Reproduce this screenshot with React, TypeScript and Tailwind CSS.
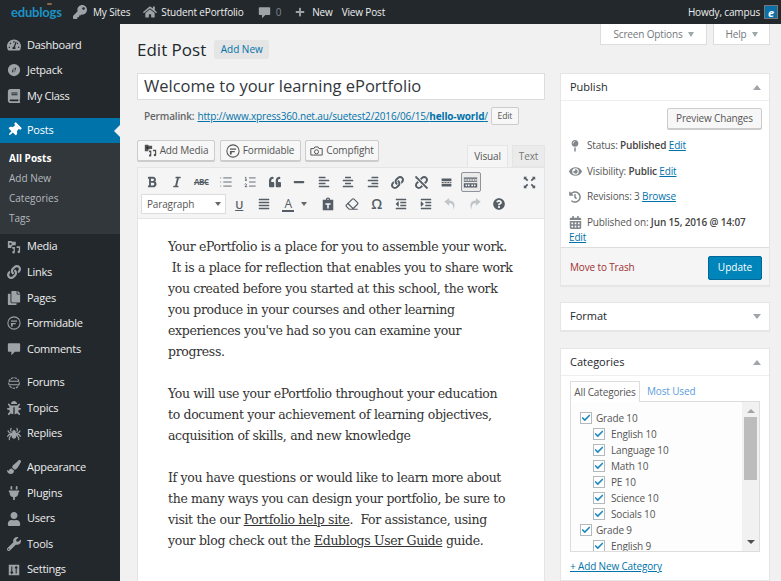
import React from 'react'
import {
  FaTachometerAlt, FaBook, FaThumbtack, FaLink, FaUnlink, FaCopy, FaPaintBrush, FaPlug, FaUser, FaWrench,
  FaKey, FaHome, FaPlus, FaBold, FaItalic, FaQuoteLeft, FaMinus, FaAlignLeft, FaAlignCenter, FaAlignRight,
  FaAlignJustify, FaOutdent, FaIndent, FaQuestionCircle, FaEye, FaHistory,
  FaCalendarAlt, FaMapPin, FaBug, FaSpider,
} from 'react-icons/fa'
import { Check, List, ListOrdered, Eraser } from 'lucide-react'

const MediaIcon = ({ className = '' }: { className?: string }) => (
  <svg viewBox="0 0 16 16" className={className} fill="currentColor">
    <path d="M1 1h4l1 1h4v4H7.500A2.500 2.500 0 0 0 5 8.500V9H1z" />
    <circle cx="4" cy="4.500" r="1.300" fill="#23282d" />
    <path d="M6 8h3v6a1.500 1.500 0 1 1-1.500-1.500V10H6zM11 7h4v6.500a1.500 1.500 0 1 1-1.500-1.500V9H11z" />
  </svg>
)

const FormidableIcon = ({ className = '' }: { className?: string }) => (
  <svg viewBox="0 0 16 16" className={className} fill="none" stroke="currentColor">
    <circle cx="8" cy="8" r="7" strokeWidth="1.200" />
    <path d="M4.500 5h7v1.500h-7zM4.500 8h5.500v1.500H6.500V12h-2z" fill="currentColor" stroke="none" />
  </svg>
)

const JetpackIcon = ({ className = '' }: { className?: string }) => (
  <svg viewBox="0 0 16 16" className={className} fill="currentColor">
    <path d="M8 1a7 7 0 1 0 0 14A7 7 0 0 0 8 1zM7.200 10.500H5.600L7.200 5zM8.800 11V5.500h1.600z" fillRule="evenodd" />
  </svg>
)

const GlobeIcon = ({ className = '' }: { className?: string }) => (
  <svg viewBox="0 0 16 16" className={className} fill="none" stroke="currentColor" strokeWidth="1.300">
    <circle cx="8" cy="8" r="6" strokeDasharray="3 1" />
    <path d="M2.500 6h11M2.500 10h11" />
  </svg>
)

const BubbleIcon = ({ className = '' }: { className?: string }) => (
  <svg viewBox="0 0 16 16" className={className} fill="currentColor">
    <path d="M2 1.500h12a1 1 0 0 1 1 1V10a1 1 0 0 1-1 1H9l-4 4v-4H2a1 1 0 0 1-1-1V2.500a1 1 0 0 1 1-1z" />
  </svg>
)

const SettingsIcon = ({ className = '' }: { className?: string }) => (
  <svg viewBox="0 0 16 16" className={className}>
    <rect x="2" y="2" width="12" height="12" fill="currentColor" />
    <path d="M5.500 4v8M4 10l1.500 2L7 10M10.500 12V4M9 6l1.500-2L12 6" stroke="#23282d" strokeWidth="1.200" fill="none" />
  </svg>
)

const MoreIcon = ({ className = '' }: { className?: string }) => (
  <svg viewBox="0 0 16 16" className={className} fill="currentColor">
    <path d="M2 3h12v3.500H2zM2 7.500h2.500v1H2zM5.500 7.500h2.500v1H5.500zM9 7.500h2.500v1H9zM12.500 7.500H14v1h-1.500zM2 9.500h12V13H2z" />
  </svg>
)

const KitchenIcon = ({ className = '' }: { className?: string }) => (
  <svg viewBox="0 0 18 14" className={className} fill="currentColor">
    <path d="M1 1h16v1.500H1zM1 3.500h2v1H1zM4 3.500h2v1H4zM7 3.500h2v1H7zM10 3.500h2v1h-2zM13 3.500h2v1h-2zM16 3.500h1v1h-1zM1 5.500h16v1H1zM1 8h16v5H1z" />
    <path d="M3 9.500h2v2H3zM6 9.500h2v2H6zM10 9.500h2v2h-2zM13 9.500h2v2h-2z" fill="#f5f5f5" />
  </svg>
)

const FullscreenIcon = ({ className = '' }: { className?: string }) => (
  <svg viewBox="0 0 16 16" className={className} fill="currentColor">
    <path d="M1 1h4L3.800 2.200 6.500 5 5 6.500 2.200 3.800 1 5zM15 1v4l-1.200-1.200L11 6.500 9.500 5l2.700-2.800L11 1zM1 15v-4l1.200 1.200L5 9.500 6.500 11l-2.700 2.800L5 15zM15 15h-4l1.200-1.200L9.500 11 11 9.500l2.800 2.700L15 11z" />
  </svg>
)

const CompfightIcon = ({ className = '' }: { className?: string }) => (
  <svg viewBox="0 0 16 14" className={className} fill="none" stroke="currentColor" strokeWidth="1.200">
    <path d="M1 4h4l1-2h4l1 2h4v8H1z" />
    <circle cx="8" cy="8" r="2.500" />
  </svg>
)

const PasteIcon = ({ className = '' }: { className?: string }) => (
  <svg viewBox="0 0 16 16" className={className} fill="currentColor">
    <path d="M2 3h3.500a2.500 2.500 0 0 1 5 0H14v12H2zM7 3h2a1 1 0 0 0-2 0zM5 7v1.800h2.100V13h1.800V8.800H11V7z" fillRule="evenodd" />
  </svg>
)

const UndoIcon = ({ className = '' }: { className?: string }) => (
  <svg viewBox="0 0 16 16" className={className} fill="currentColor">
    <path d="M7 1 1.500 5.500 7 10V7.200c3.500 0 5 2 5 7.300 2.300-5.500 1.500-10.500-5-10.500z" />
  </svg>
)

const RedoIcon = ({ className = '' }: { className?: string }) => (
  <svg viewBox="0 0 16 16" className={className} fill="currentColor">
    <path d="M9 1l5.500 4.500L9 10V7.200c-3.500 0-5 2-5 7.300C1.700 9 2.500 4 9 4z" />
  </svg>
)

type NavItem = { label: string; icon: React.ComponentType<{ className?: string }>; gap?: boolean }

const NAV_TOP: NavItem[] = [
  { label: 'Dashboard', icon: FaTachometerAlt },
  { label: 'Jetpack', icon: JetpackIcon },
  { label: 'My Class', icon: FaBook },
]

const NAV_BOTTOM: NavItem[] = [
  { label: 'Media', icon: MediaIcon },
  { label: 'Links', icon: FaLink },
  { label: 'Pages', icon: FaCopy },
  { label: 'Formidable', icon: FormidableIcon },
  { label: 'Comments', icon: BubbleIcon },
  { label: 'Forums', icon: GlobeIcon, gap: true },
  { label: 'Topics', icon: FaBug },
  { label: 'Replies', icon: FaSpider },
  { label: 'Appearance', icon: FaPaintBrush, gap: true },
  { label: 'Plugins', icon: FaPlug },
  { label: 'Users', icon: FaUser },
  { label: 'Tools', icon: FaWrench },
  { label: 'Settings', icon: SettingsIcon },
]

const NavRow = ({ item }: { item: NavItem }) => (
  <div className={`flex h-[25.6px] shrink-0 items-center pl-[7px] text-[#eeeeee] ${item.gap ? 'mt-2' : ''}`}>
    <span className="flex w-[20px] shrink-0 items-center">
      <item.icon className="h-[14px] w-[14px] text-[#9ea3a8]" />
    </span>
    <span>{item.label}</span>
  </div>
)

const Sidebar = () => (
  <div className="flex h-full w-[120px] shrink-0 flex-col overflow-hidden bg-[#23282d] pt-2 text-[11px] tracking-[-0.25px]">
    {NAV_TOP.map((item) => (
      <NavRow key={item.label} item={item} />
    ))}
    <div className="relative mt-[9px] flex h-[25px] shrink-0 items-center bg-[#0073aa] pl-[7px] text-white">
      <span className="flex w-[20px] shrink-0 items-center">
        <FaThumbtack className="h-[14px] w-[14px] rotate-45" />
      </span>
      <span>Posts</span>
      <span className="absolute right-0 top-[7px] h-0 w-0 border-y-[6px] border-r-[6px] border-y-transparent border-r-[#f1f1f1]" />
    </div>
    <div className="flex h-[91px] shrink-0 flex-col bg-[#32373c] pl-[9px] pt-[5px] text-[10px] leading-[20px] tracking-normal text-[#b4b9be]">
      <div className="font-bold text-white">All Posts</div>
      <div>Add New</div>
      <div>Categories</div>
      <div>Tags</div>
    </div>
    {NAV_BOTTOM.map((item) => (
      <NavRow key={item.label} item={item} />
    ))}
  </div>
)

const TopBar = () => (
  <div className="flex h-6 shrink-0 items-center bg-[#23282d] pl-[11px] pr-[3px] text-[10px] tracking-[-0.15px] text-[#eeeeee]">
    <span className="relative mr-[16px] w-[46px] text-[13px] font-bold leading-none tracking-[-0.2px] text-[#1c93c4]" style={{ fontFamily: 'Lato, sans-serif' }}>
      edublogs
      <span className="absolute right-[5px] top-[-3px] h-[2px] w-[5px] rounded-full bg-[#8a6a4a]" />
    </span>
    <FaKey className="mr-[6px] h-[14px] w-[14px] text-[#9ea3a8]" />
    <span className="mr-[13px]">My Sites</span>
    <FaHome className="mr-[4px] h-[14px] w-[14px] text-[#9ea3a8]" />
    <span className="mr-[14px]">Student ePortfolio</span>
    <BubbleIcon className="mr-[5px] h-[13px] w-[13px] text-[#9ea3a8]" />
    <span className="mr-[14px] text-[#81868b]">0</span>
    <FaPlus className="mr-[7px] h-[10px] w-[10px] text-[#9ea3a8]" />
    <span className="mr-[9px]">New</span>
    <span>View Post</span>
    <span className="ml-auto mr-[4px]">Howdy, campus</span>
    <span className="flex h-[14px] w-[14px] items-center justify-center border border-[#777] bg-[#0b6fa8] text-[11px] font-bold italic leading-none text-white">e</span>
  </div>
)

const Btn = ({ icon, label, className = 'px-[5px]' }: { icon?: React.ReactNode; label: string; className?: string }) => (
  <div className={`flex h-[21px] items-center justify-center gap-[3px] rounded-[2px] border border-[#cccccc] bg-[#f7f7f7] text-[10px] tracking-[-0.15px] text-[#555555] shadow-[0_1px_0_#cccccc] ${className}`}>
    {icon}
    <span>{label}</span>
  </div>
)

const TB = ({ w = 24.5, children }: { w?: number; children: React.ReactNode }) => (
  <span className="flex h-[20px] items-center justify-center text-[#555d66]" style={{ width: w }}>
    {children}
  </span>
)

const i = 'h-[12px] w-[12px]'

const Toolbar = () => (
  <div className="border border-[#e5e5e5] bg-[#f5f5f5] py-[3px] pl-[2px]">
    <div className="flex h-[22px] items-center">
      <TB><FaBold className={i} /></TB>
      <TB><FaItalic className={i} /></TB>
      <TB><span className="text-[8px] font-bold tracking-[-0.5px]"><s>ABC</s></span></TB>
      <TB><List className="h-[14px] w-[14px]" strokeWidth={1.5} /></TB>
      <TB><ListOrdered className="h-[14px] w-[14px]" strokeWidth={1.5} /></TB>
      <TB><FaQuoteLeft className={i} /></TB>
      <TB><FaMinus className={i} /></TB>
      <TB><FaAlignLeft className={i} /></TB>
      <TB><FaAlignCenter className={i} /></TB>
      <TB><FaAlignRight className={i} /></TB>
      <TB><FaLink className="h-[13px] w-[13px]" /></TB>
      <TB><FaUnlink className="h-[13px] w-[13px]" /></TB>
      <TB><MoreIcon className="h-[13px] w-[13px]" /></TB>
      <span className="ml-[2px] flex h-[20px] w-[20px] items-center justify-center rounded-[2px] border border-[#8f9499] bg-[#ebebeb] text-[#555d66]">
        <KitchenIcon className="h-[13px] w-[15px]" />
      </span>
      <span className="ml-auto mr-[8px] text-[#555d66]">
        <FullscreenIcon className="h-[13px] w-[13px]" />
      </span>
    </div>
    <div className="flex h-[22px] items-center pl-[1px]">
      <div className="mr-[1px] flex h-[20px] w-[85px] items-center justify-between border border-[#dddddd] bg-white pl-[5px] pr-[4px] text-[10px] tracking-[-0.15px] text-[#555555]">
        <span>Paragraph</span>
        <span className="h-0 w-0 border-x-[3px] border-t-[4px] border-x-transparent border-t-[#666]" />
      </div>
      <TB><span className="text-[11px] font-semibold leading-none underline">U</span></TB>
      <TB><FaAlignJustify className={i} /></TB>
      <TB>
        <span className="border-b-2 border-[#555d66] px-[2px] text-[12px] font-normal leading-[13px]">A</span>
      </TB>
      <span className="mr-[9px] h-0 w-0 border-x-[3px] border-t-[4px] border-x-transparent border-t-[#666]" />
      <TB><PasteIcon className="h-[14px] w-[14px]" /></TB>
      <TB><Eraser className="h-[14px] w-[14px]" strokeWidth={2} /></TB>
      <TB><span className="text-[14px] font-semibold leading-none">Ω</span></TB>
      <TB><FaOutdent className={i} /></TB>
      <TB><FaIndent className={i} /></TB>
      <TB><UndoIcon className="h-[14px] w-[14px] text-[#c2c5c8]" /></TB>
      <TB><RedoIcon className="h-[14px] w-[14px] text-[#c2c5c8]" /></TB>
      <TB><FaQuestionCircle className={i} /></TB>
    </div>
  </div>
)

const Editor = () => (
  <div className="min-h-0 flex-1 border-x border-[#e5e5e5] bg-white pl-[30px] pt-[17px] text-[12.500px] leading-[21px] tracking-[-0.34px] text-[#333333]" style={{ fontFamily: '"DejaVu Serif", serif' }}>
    <p>
      Your ePortfolio is a place for you to assemble your work.<br />
      &nbsp;It is a place for reflection that enables you to share work<br />
      you created before you started at this school, the work<br />
      you produce in your courses and other learning<br />
      experiences you've had so you can examine your<br />
      progress.
    </p>
    <p className="mt-[21px]">
      You will use your ePortfolio throughout your education<br />
      to document your achievement of learning objectives,<br />
      acquisition of skills, and new knowledge
    </p>
    <p className="mt-[21px]">
      If you have questions or would like to learn more about<br />
      the many ways you can design your portfolio, be sure to<br />
      visit the our <u>Portfolio help site</u>.&nbsp; For assistance, using<br />
      your blog check out the <u>Edublogs User Guide</u> guide.
    </p>
  </div>
)

const EditorColumn = () => (
  <div className="flex w-[408px] shrink-0 flex-col">
    <div className="flex h-[27px] items-center border border-[#dddddd] bg-white pl-[6px] text-[16.500px] text-[#32373c]">
      Welcome to your learning ePortfolio
    </div>
    <div className="mt-[7px] flex h-[18px] items-center pl-[7px] text-[10px] tracking-[-0.15px] text-[#666666]">
      <span className="mr-[3px] font-semibold">Permalink:</span>
      <span className="text-[#0073aa] underline">http://www.xpress360.net.au/suetest2/2016/06/15/<b>hello-world</b>/</span>
      <span className="ml-[3px] flex h-[18px] w-[28px] items-center justify-center rounded-[2px] border border-[#cccccc] bg-[#f7f7f7] text-[8.500px] text-[#555555]">Edit</span>
    </div>
    <div className="mt-[15px] flex items-end justify-between">
      <div className="mb-[6px] flex gap-[4.5px]">
        <Btn className="w-[78px]" icon={<MediaIcon className="h-[13px] w-[13px]" />} label="Add Media" />
        <Btn className="w-[81px]" icon={<FormidableIcon className="h-[14px] w-[14px]" />} label="Formidable" />
        <Btn className="w-[74px]" icon={<CompfightIcon className="h-[12px] w-[13px]" />} label="Compfight" />
      </div>
      <div className="flex items-end gap-[4px] text-[10px] tracking-[-0.15px] text-[#555555]">
        <span className="flex h-[22px] w-[41px] items-center justify-center border border-b-0 border-[#e5e5e5] bg-[#f5f5f5]">Visual</span>
        <span className="flex h-[22px] w-[33px] items-center justify-center border border-[#e5e5e5] bg-[#ebebeb] text-[#777777]">Text</span>
      </div>
    </div>
    <Toolbar />
    <Editor />
  </div>
)

const Box = ({ title, up = true, children, className = '' }: { title: string; up?: boolean; children?: React.ReactNode; className?: string }) => (
  <div className={`border border-[#e5e5e5] bg-white shadow-[0_1px_1px_rgba(0,0,0,0.04)] ${className}`}>
    <div className={`flex h-[27px] items-center justify-between pl-[9px] pr-[8px] text-[11px] text-[#23282d] ${children ? 'border-b border-[#eeeeee]' : ''}`}>
      <span>{title}</span>
      {up ? (
        <span className="h-0 w-0 border-x-[4px] border-b-[5px] border-x-transparent border-b-[#a0a5aa]" />
      ) : (
        <span className="h-0 w-0 border-x-[4px] border-t-[5px] border-x-transparent border-t-[#a0a5aa]" />
      )}
    </div>
    {children}
  </div>
)

const Misc = ({ icon, children }: { icon: React.ReactNode; children: React.ReactNode }) => (
  <div className="flex h-[25.5px] items-center">
    <span className="flex w-[18px] shrink-0 items-center text-[#82878c]">{icon}</span>
    <span>{children}</span>
  </div>
)

const A = ({ children }: { children: React.ReactNode }) => <span className="text-[#0073aa] underline">{children}</span>

const PublishBox = () => (
  <Box title="Publish">
    <div className="flex justify-end pr-[7px] pt-[7px]">
      <Btn className="w-[95px]" label="Preview Changes" />
    </div>
    <div className="mt-[4px] pl-[8px] text-[10px] tracking-[-0.15px] text-[#555555]">
      <Misc icon={<FaMapPin className="h-[12px] w-[12px]" />}>Status: <b className="font-semibold text-[#444]">Published</b> <A>Edit</A></Misc>
      <Misc icon={<FaEye className="h-[13px] w-[13px]" />}>Visibility: <b className="font-semibold text-[#444]">Public</b> <A>Edit</A></Misc>
      <Misc icon={<FaHistory className="h-[12px] w-[12px]" />}>Revisions: 3 <A>Browse</A></Misc>
      <Misc icon={<FaCalendarAlt className="h-[13px] w-[13px]" />}>Published on: <b className="font-semibold text-[#444]">Jun 15, 2016 @ 14:07</b></Misc>
      <div className="-mt-[5px] mb-[3px] h-[14px] leading-[14px]"><A>Edit</A></div>
    </div>
    <div className="flex h-[38px] items-center justify-between border-t border-[#dddddd] bg-[#f5f5f5] pl-[9px] pr-[7px] pt-[2px]">
      <span className="text-[10px] tracking-[-0.15px] text-[#a03030]">Move to Trash</span>
      <span className="flex h-[24px] w-[54px] items-center justify-center rounded-[2px] border border-[#006799] bg-[#0085ba] text-[10px] text-white">Update</span>
    </div>
  </Box>
)

const Cat = ({ label, child }: { label: string; child?: boolean }) => (
  <div className={`flex h-[16px] items-center gap-[4px] ${child ? 'pl-[13px]' : ''}`}>
    <span className="flex h-[12px] w-[12px] shrink-0 items-center justify-center border border-[#b4b9be] bg-white">
      <Check className="h-[10px] w-[10px] text-[#1e8cbe]" strokeWidth={4} />
    </span>
    <span className={child ? 'ml-[2px]' : ''}>{label}</span>
  </div>
)

const CategoriesBox = () => (
  <Box title="Categories" className="mt-[1px] flex-1">
    <div className="px-[9px] pt-[5px] text-[10px] tracking-[-0.15px]">
      <div className="flex items-end">
        <span className="relative z-10 -mb-px flex h-[21px] w-[70px] items-center justify-center border border-b-0 border-[#dddddd] bg-white text-[#555555]">All Categories</span>
        <span className="ml-[7px] flex h-[20px] items-center text-[#5b9dd9]">Most Used</span>
      </div>
      <div className="flex h-[151px] justify-between overflow-hidden border border-[#dddddd] bg-[#fdfdfd]">
        <div className="pl-[9px] pt-[8px] text-[#555555]">
          <Cat label="Grade 10" />
          <Cat label="English 10" child />
          <Cat label="Language 10" child />
          <Cat label="Math 10" child />
          <Cat label="PE 10" child />
          <Cat label="Science 10" child />
          <Cat label="Socials 10" child />
          <Cat label="Grade 9" />
          <Cat label="English 9" child />
        </div>
        <div className="flex w-[17px] shrink-0 flex-col items-center bg-[#f1f1f1] pt-[7px]">
          <span className="h-0 w-0 border-x-[4px] border-b-[4px] border-x-transparent border-b-[#a3a3a3]" />
          <span className="mt-[4px] h-[63px] w-[13px] bg-[#bcbcbc]" />
          <span className="mt-auto mb-[7px] h-0 w-0 border-x-[4px] border-t-[4px] border-x-transparent border-t-[#505050]" />
        </div>
      </div>
      <div className="mt-[7px] text-[#0073aa] underline">+ Add New Category</div>
    </div>
  </Box>
)

const App = () => (
  <div className="flex h-[581px] w-[781px] flex-col overflow-hidden bg-[#f1f1f1]" style={{ fontFamily: '"Open Sans", sans-serif' }}>
    <TopBar />
    <div className="flex min-h-0 flex-1">
      <Sidebar />
      <div className="flex min-w-0 flex-1 flex-col pl-[17px] pr-[11px]">
        <div className="flex h-[49px] shrink-0 items-start justify-between">
          <div className="mt-[16px] flex items-center">
            <span className="text-[17px] leading-[19px] text-[#23282d]">Edit Post</span>
            <span className="ml-[8px] flex h-[19px] w-[55px] items-center justify-center rounded-[2px] bg-[#e5e5e5] text-[10px] text-[#0073aa]">Add New</span>
          </div>
          <div className="flex h-[21px] gap-[6px] text-[10px] tracking-[-0.15px] text-[#72777c]">
            <span className="flex w-[107px] items-center justify-center gap-[5px] border border-t-0 border-[#dddddd] bg-white">
              Screen Options
              <span className="h-0 w-0 border-x-[3.5px] border-t-[5px] border-x-transparent border-t-[#a0a5aa]" />
            </span>
            <span className="flex w-[57px] items-center justify-center gap-[5px] border border-t-0 border-[#dddddd] bg-white">
              Help
              <span className="h-0 w-0 border-x-[3.5px] border-t-[5px] border-x-transparent border-t-[#a0a5aa]" />
            </span>
          </div>
        </div>
        <div className="flex min-h-0 flex-1 gap-[15px]">
          <EditorColumn />
          <div className="flex w-[210px] shrink-0 flex-col gap-[16px]">
            <PublishBox />
            <Box title="Format" up={false} />
            <CategoriesBox />
          </div>
        </div>
      </div>
    </div>
  </div>
)

export default App
